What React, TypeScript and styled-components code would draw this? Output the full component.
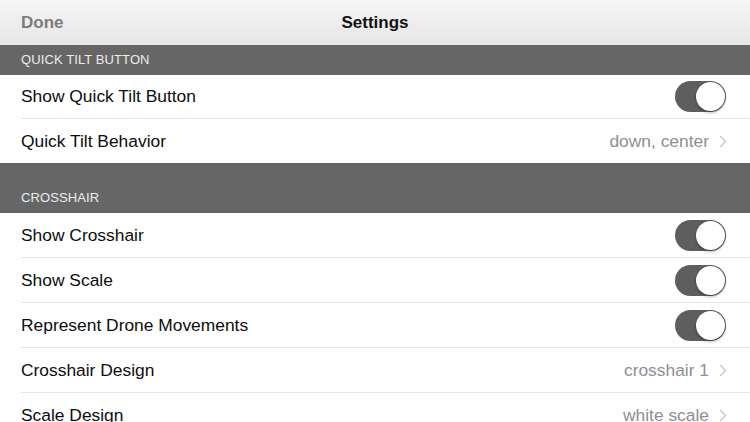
import React from "react";
import styled, { createGlobalStyle } from "styled-components";

const Global = createGlobalStyle`
  html, body { margin: 0; padding: 0; background: #ffffff; }
  body { font-family: "Liberation Sans", Arial, sans-serif; -webkit-font-smoothing: antialiased; }
  #root { width: 750px; height: 422px; overflow: hidden; }
`;

const Page = styled.div`
  width: 750px;
  height: 422px;
  overflow: hidden;
  display: flex;
  flex-direction: column;
  background: #ffffff;
`;

const NavBar = styled.div`
  height: 45px;
  flex: 0 0 45px;
  display: grid;
  grid-template-columns: 1fr auto 1fr;
  align-items: center;
  padding: 0 21px;
  box-sizing: border-box;
  background: linear-gradient(#f5f5f5, #e6e6e6);
`;

const NavButton = styled.div`
  font-size: 17px;
  font-weight: 600;
  color: #7c7c7c;
  justify-self: start;
`;

const NavTitle = styled.div`
  font-size: 17px;
  font-weight: 700;
  color: #111111;
`;

const SectionHeader = styled.div<{ $h: number }>`
  height: ${(p) => p.$h}px;
  flex: 0 0 ${(p) => p.$h}px;
  background: #666666;
  display: flex;
  align-items: flex-end;
  padding: 0 21px 8px;
  box-sizing: border-box;
  font-size: 13px;
  color: #ececec;
  letter-spacing: 0.1px;
`;

const Row = styled.div<{ $h: number }>`
  height: ${(p) => p.$h}px;
  flex: 0 0 ${(p) => p.$h}px;
  display: flex;
  align-items: center;
  padding-left: 21px;
  box-sizing: border-box;
`;

const RowInner = styled.div<{ $sep: boolean }>`
  flex: 1;
  height: 100%;
  display: flex;
  align-items: center;
  padding-right: 23px;
  border-bottom: ${(p) => (p.$sep ? "1px solid #e6e6e6" : "none")};
  box-sizing: border-box;
`;

const Label = styled.div`
  flex: 1;
  font-size: 17.4px;
  color: #0d0d0d;
`;

const Value = styled.div`
  font-size: 17.4px;
  color: #8e8e93;
  margin-right: 10px;
`;

const Switch = styled.div`
  width: 51px;
  height: 31px;
  border-radius: 16px;
  background: #5e5e5e;
  position: relative;
  margin-right: 1px;
`;

const Knob = styled.div`
  position: absolute;
  top: 1px;
  right: 1px;
  width: 29px;
  height: 29px;
  border-radius: 50%;
  background: #ffffff;
  box-shadow: 0 2px 3px rgba(0, 0, 0, 0.25), 0 0 0 0.5px rgba(0, 0, 0, 0.2);
`;

const Chevron = () => (
  <svg width="8" height="13" viewBox="0 0 8 13">
    <path d="M1.2 1 L6.5 6.5 L1.2 12" fill="none" stroke="#c7c7cc" strokeWidth="1.4" />
  </svg>
);

type Item = { label: string; value?: string; toggle?: boolean };

const SettingRow = ({ item, sep, h }: { item: Item; sep: boolean; h: number }) => (
  <Row $h={h}>
    <RowInner $sep={sep}>
      <Label>{item.label}</Label>
      {item.toggle ? (
        <Switch>
          <Knob />
        </Switch>
      ) : (
        <>
          <Value>{item.value}</Value>
          <Chevron />
        </>
      )}
    </RowInner>
  </Row>
);

const sections: { title: string; h: number; rowH: number; items: Item[] }[] = [
  {
    title: "QUICK TILT BUTTON",
    h: 30,
    rowH: 44,
    items: [
      { label: "Show Quick Tilt Button", toggle: true },
      { label: "Quick Tilt Behavior", value: "down, center" },
    ],
  },
  {
    title: "CROSSHAIR",
    h: 50,
    rowH: 45,
    items: [
      { label: "Show Crosshair", toggle: true },
      { label: "Show Scale", toggle: true },
      { label: "Represent Drone Movements", toggle: true },
      { label: "Crosshair Design", value: "crosshair 1" },
      { label: "Scale Design", value: "white scale" },
    ],
  },
];

export default function App() {
  return (
    <Page>
      <Global />
      <NavBar>
        <NavButton>Done</NavButton>
        <NavTitle>Settings</NavTitle>
        <div />
      </NavBar>
      {sections.map((s) => (
        <React.Fragment key={s.title}>
          <SectionHeader $h={s.h}>{s.title}</SectionHeader>
          {s.items.map((it, i) => (
            <SettingRow
              key={it.label}
              item={it}
              h={s.rowH}
              sep={i < s.items.length - 1 || s.title === "CROSSHAIR"}
            />
          ))}
        </React.Fragment>
      ))}
    </Page>
  );
}
